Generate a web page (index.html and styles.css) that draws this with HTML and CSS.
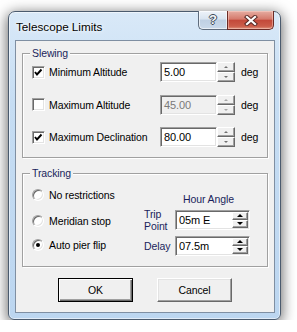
FILE: index.html
```html
<!DOCTYPE html>
<html lang="en">
<head>
  <meta charset="UTF-8">
  <title>Telescope Limits</title>
  <link rel="stylesheet" href="styles.css">
</head>
<body>
  <div class="window">
    <div class="titlebar">
      <span class="title">Telescope Limits</span>
      <div class="caption-buttons">
        <div class="cap help"><span>?</span></div>
        <div class="cap close">
          <svg width="14" height="11" viewBox="0 0 14 11">
            <path d="M3 2 L11 9 M11 2 L3 9" stroke="#5a2a26" stroke-width="4.2" stroke-linecap="square"/>
            <path d="M3 2 L11 9 M11 2 L3 9" stroke="#fff" stroke-width="2.2" stroke-linecap="square"/>
          </svg>
        </div>
      </div>
    </div>

    <div class="client">
      <div class="group slewing">
        <span class="group-title">Slewing</span>

        <div class="limit-row">
          <span class="check checked"><svg width="11" height="11" viewBox="0 0 11 11"><polyline points="2,5 4,7.5 8.5,2.5" fill="none" stroke="#000" stroke-width="1.9"/></svg></span>
          <span class="label">Minimum Altitude</span>
          <span class="field">5.00</span>
          <span class="spin"><span class="up"></span><span class="down"></span></span>
          <span class="unit">deg</span>
        </div>

        <div class="limit-row">
          <span class="check"></span>
          <span class="label">Maximum Altitude</span>
          <span class="field disabled">45.00</span>
          <span class="spin disabled"><span class="up"></span><span class="down"></span></span>
          <span class="unit">deg</span>
        </div>

        <div class="limit-row">
          <span class="check checked"><svg width="11" height="11" viewBox="0 0 11 11"><polyline points="2,5 4,7.5 8.5,2.5" fill="none" stroke="#000" stroke-width="1.9"/></svg></span>
          <span class="label">Maximum Declination</span>
          <span class="field">80.00</span>
          <span class="spin"><span class="up"></span><span class="down"></span></span>
          <span class="unit">deg</span>
        </div>
      </div>

      <div class="group tracking">
        <span class="group-title">Tracking</span>

        <div class="radios">
          <div class="radio-row"><span class="radio"></span>No restrictions</div>
          <div class="radio-row"><span class="radio"></span>Meridian stop</div>
          <div class="radio-row"><span class="radio selected"></span>Auto pier flip</div>
        </div>

        <div class="hour-angle">
          <div class="ha-title">Hour Angle</div>
          <div class="ha-row trip">
            <span class="ha-label">Trip<br>Point</span>
            <span class="ha-field"><span class="ha-text">05m E</span><span class="spin inner"><span class="up"></span><span class="down"></span></span></span>
          </div>
          <div class="ha-row delay">
            <span class="ha-label">Delay</span>
            <span class="ha-field"><span class="ha-text">07.5m</span><span class="spin inner"><span class="up"></span><span class="down"></span></span></span>
          </div>
        </div>
      </div>

      <div class="buttons">
        <div class="btn default">OK</div>
        <div class="btn">Cancel</div>
      </div>
    </div>
  </div>
</body>
</html>
```

FILE: styles.css
```css
body {
  margin: 0;
  background: #fff;
  font-family: "Liberation Sans", Arial, sans-serif;
  font-size: 10.5px;
  letter-spacing: -0.1px;
  color: #000;
}
.window {
  margin: 11px 0 0 8px;
  width: 260px;
  height: 301px;
  padding: 0 5px 6px 6px;
  border: 1px solid #4b5b6e;
  border-radius: 7px 7px 6px 6px;
  background: linear-gradient(to bottom, #d9e9f8 0%, #c6ddf3 30%, #bcd6f0 100%);
  box-shadow: inset 0 0 0 1px rgba(255,255,255,0.55), 0 3px 14px 1px rgba(0,0,0,0.6);
  display: flex;
  flex-direction: column;
}
.titlebar {
  height: 28px;
  display: flex;
  align-items: center;
  flex: none;
}
.title {
  padding-left: 1px;
  font-size: 11.7px;
  letter-spacing: 0;
  text-shadow: 0 0 6px #fff, 0 0 3px #fff;
}
.caption-buttons {
  margin-left: auto;
  margin-right: 1px;
  align-self: flex-start;
  margin-top: -1px;
  display: flex;
}
.cap {
  height: 19px;
  border: 1px solid #5e6c7d;
  border-top: none;
  display: flex;
  align-items: center;
  justify-content: center;
  box-sizing: border-box;
}
.help {
  width: 29px;
  border-radius: 0 0 0 5px;
  border-right: none;
  background: linear-gradient(to bottom, #eef3f9 0%, #d9e4f0 45%, #bfd0e3 50%, #c9d9ea 100%);
  box-shadow: inset 0 0 0 1px rgba(255,255,255,0.6);
}
.help span {
  font: bold 13px "Liberation Sans", Arial, sans-serif;
  color: #f4f6f8;
  text-shadow: 1px 0 #3e4a58, -1px 0 #3e4a58, 0 1px #3e4a58, 0 -1px #3e4a58;
  margin-top: -1px;
}
.close {
  width: 47px;
  border-radius: 0 0 5px 0;
  border-color: #6b2b26;
  background: linear-gradient(to bottom, #e6ada2 0%, #d57a6c 45%, #c3493a 52%, #cb5d4a 85%, #df9580 100%);
  box-shadow: inset 0 0 0 1px rgba(255,220,210,0.45);
}
.close svg {
  display: block;
}
.client {
  flex: 1;
  background: #f0f0f0;
  border: 1px solid #7f8fa2;
  padding: 0 6px;
  display: flex;
  flex-direction: column;
}
.group {
  position: relative;
  box-sizing: border-box;
  border: 1px solid #a0a0a0;
  box-shadow: inset 1px 1px #fff, 1px 1px #fff;
}
.group-title {
  position: absolute;
  top: -7px;
  left: 7px;
  padding: 0 2px;
  background: #f0f0f0;
  line-height: 13px;
  color: #1a1f5c;
}
.slewing {
  margin-top: 12px;
  height: 105px;
  padding: 8px 0 0 9px;
  display: flex;
  flex-direction: column;
  gap: 12.5px;
}
.limit-row {
  display: flex;
  align-items: center;
  height: 20px;
}
.check {
  width: 13px;
  height: 13px;
  box-sizing: border-box;
  border: 1px solid;
  border-color: #a0a0a0 #fff #fff #a0a0a0;
  box-shadow: inset 1px 1px #696969, inset -1px -1px #e3e3e3;
  background: #fff;
  display: flex;
  align-items: center;
  justify-content: center;
}
.check svg {
  display: block;
}
.label {
  width: 111px;
  margin-left: 4px;
}
.field {
  width: 57px;
  height: 20px;
  box-sizing: border-box;
  border: 1px solid;
  border-color: #a0a0a0 #fff #fff #a0a0a0;
  box-shadow: inset 1px 1px #696969, inset -1px -1px #e3e3e3;
  background: #fff;
  padding: 0 0 0 3px;
  line-height: 18px;
  font-size: 11px;
}
.field.disabled {
  background: #f0f0f0;
  color: #7a7a7a;
}
.spin {
  width: 18px;
  height: 20px;
  display: flex;
  flex-direction: column;
}
.spin span {
  flex: 1;
  box-sizing: border-box;
  background: #f0f0f0;
  border: 1px solid;
  border-color: #fff #696969 #696969 #fff;
  box-shadow: inset -1px -1px #a0a0a0;
  position: relative;
}
.spin span::after {
  content: "";
  position: absolute;
  left: 50%;
  top: 50%;
  margin: -1px 0 0 -2px;
  border-left: 2px solid transparent;
  border-right: 2px solid transparent;
}
.spin .up::after {
  border-bottom: 2px solid #707070;
}
.spin .down::after {
  border-top: 2px solid #707070;
}
.spin.disabled .up::after {
  border-bottom-color: #a8a8a8;
}
.spin.disabled .down::after {
  border-top-color: #a8a8a8;
}
.spin.inner span::after {
  margin: -2px 0 0 -3px;
  border-left-width: 3px;
  border-right-width: 3px;
}
.spin.inner .up::after {
  border-bottom: 3px solid #000;
}
.spin.inner .down::after {
  border-top: 3px solid #000;
}
.unit {
  margin-left: 6px;
}
.tracking {
  margin-top: 15px;
  height: 94px;
  padding: 14px 0 0 9px;
  display: flex;
}
.radios {
  width: 112px;
  display: flex;
  flex-direction: column;
  gap: 12px;
}
.radio-row {
  display: flex;
  align-items: center;
  height: 14px;
}
.radio-row + .radio-row + .radio-row {
  margin-top: -2px;
}
.radio {
  width: 12px;
  height: 12px;
  box-sizing: border-box;
  border-radius: 50%;
  border: 1px solid;
  border-color: #a0a0a0 #fff #fff #a0a0a0;
  box-shadow: inset 1px 1px #696969, inset -1px -1px #e3e3e3;
  background: #fff;
  margin-right: 5px;
  position: relative;
}
.radio.selected::after {
  content: "";
  position: absolute;
  left: 3px;
  top: 3px;
  width: 4px;
  height: 4px;
  border-radius: 50%;
  background: #000;
}
.hour-angle {
  padding-top: 5px;
  display: flex;
  flex-direction: column;
}
.ha-title {
  padding-left: 39px;
  line-height: 13px;
  color: #1a1f5c;
}
.ha-row {
  display: flex;
  align-items: center;
}
.ha-row.trip {
  margin-top: 2px;
  height: 24px;
}
.ha-row.delay {
  margin-top: 4px;
}
.ha-label {
  width: 31px;
  line-height: 12px;
  color: #1a1f5c;
}
.ha-field {
  width: 75px;
  height: 20px;
  box-sizing: border-box;
  border: 1px solid;
  border-color: #a0a0a0 #fff #fff #a0a0a0;
  box-shadow: inset 1px 1px #696969, inset -1px -1px #e3e3e3;
  background: #fff;
  display: flex;
  padding: 1px;
}
.ha-text {
  flex: 1;
  padding-left: 2px;
  line-height: 16px;
  font-size: 11px;
}
.spin.inner {
  width: 16px;
  height: 16px;
}
.buttons {
  margin-top: 11px;
  display: flex;
  justify-content: center;
  gap: 24px;
}
.btn {
  width: 75px;
  height: 24px;
  box-sizing: border-box;
  border: 1px solid;
  border-color: #fff #696969 #696969 #fff;
  box-shadow: inset -1px -1px #a0a0a0, inset 1px 1px #e3e3e3;
  background: #f0f0f0;
  display: flex;
  align-items: center;
  justify-content: center;
}
.btn.default {
  border: 1px solid #000;
  box-shadow: inset 1px 1px #fff, inset -1px -1px #696969, inset -2px -2px #a0a0a0;
}
```
